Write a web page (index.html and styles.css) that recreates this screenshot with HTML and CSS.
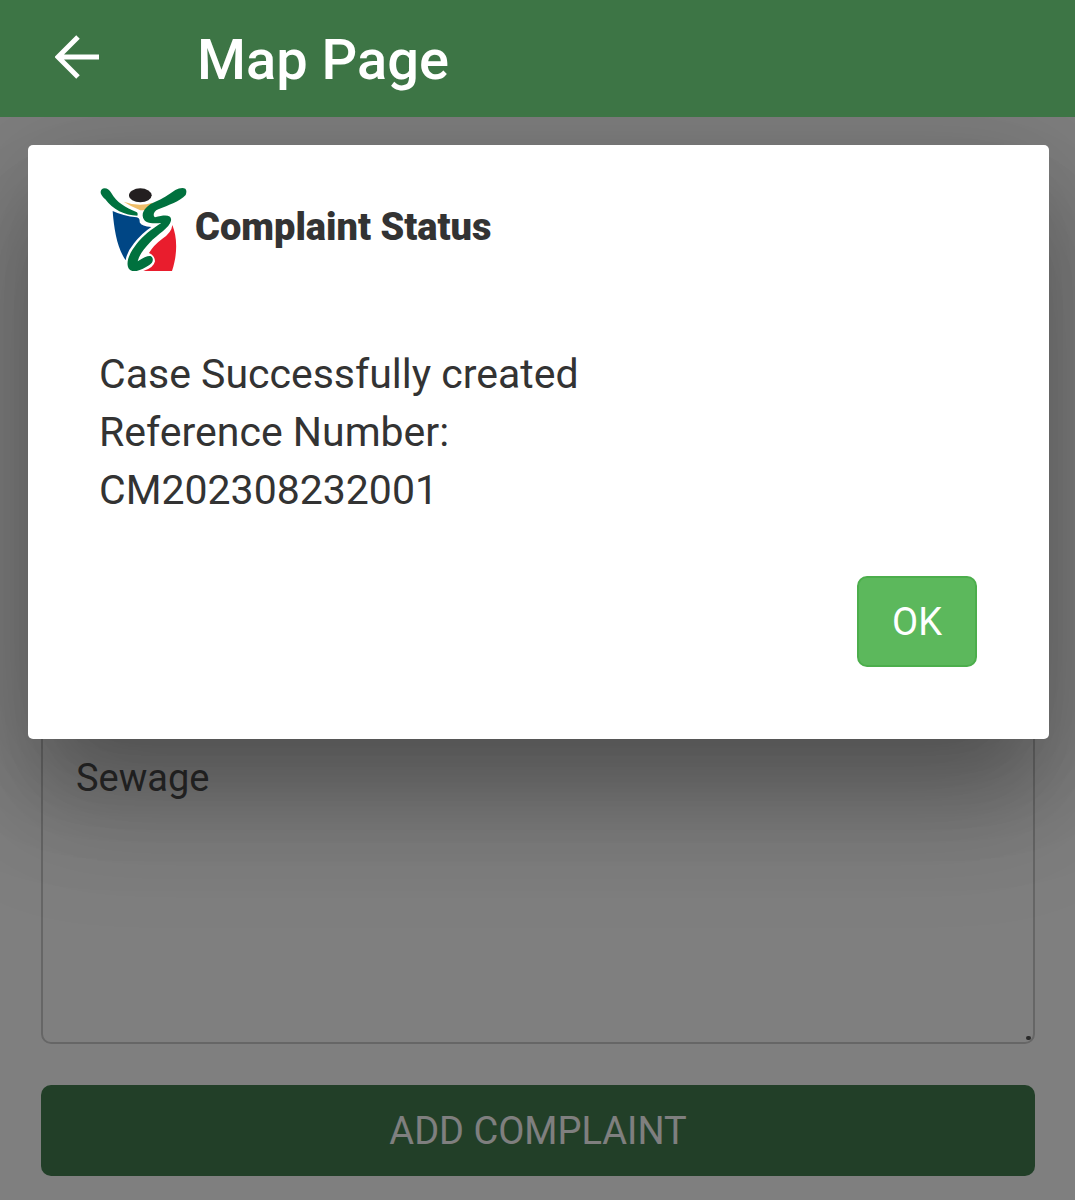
FILE: index.html
```
<!DOCTYPE html>
<html lang="en">
<head>
    <meta charset="UTF-8">
    <meta name="viewport" content="width=device-width, initial-scale=1.0">
    <title>Map Page</title>
    <link rel="stylesheet" href="styles.css">
</head>
<body>

    <header class="toolbar">
        <button class="back-button" type="button" aria-label="Back">
            <svg viewBox="0 0 44 44" width="44" height="44">
                <path d="M44 22H5M23 2L3 22L23 42" fill="none" stroke="#fff" stroke-width="5"/>
            </svg>
        </button>
        <h1>Map Page</h1>
    </header>

    <main class="page">
        <form class="complaint-form">
            <div class="field">
                <textarea id="complaint" aria-label="Complaint">Sewage</textarea>
                <span class="resize-dot"></span>
            </div>
            <button class="add-button" type="button">ADD COMPLAINT</button>
        </form>

        <!-- Status dialog -->
        <div class="overlay">
            <div class="dialog" role="dialog" aria-labelledby="dialog-title">
                <div class="dialog-header">
                    <svg class="logo" viewBox="27 15 264 258" width="88" height="86">
                        <path d="M101 65Q147 82 188 68Q181 81 164 91H151Q124 80 101 65Z" fill="#f0bd68"/>
                        <ellipse cx="151" cy="46" rx="34" ry="21" fill="#231f20"/>
                        <path d="M68 93Q99 108 140 112Q150 114 149 127Q155 140 184 141Q155 160 132 190Q110 217 107 241C82 205 72 149 68 93Z" fill="#004685"/>
                        <path d="M247 135C261 169 264 219 246 273H160Q191 264 195 244Q194 226 177 219Q190 196 217 176Q245 158 247 135Z" fill="#e91d2d"/>
                        <path d="M34 29C44 20 57 27 64 39C79 67 107 83 139 96Q145 99 142 107C105 107 67 88 46 58C36 48 28 39 34 29Z" fill="#00713e"/>
                        <path d="M286 26C278 22 266 25 256 30C235 45 216 57 196 65C173 74 157 91 158 107C160 128 180 132 214 129C185 148 160 165 139 193C119 219 105 247 117 267C130 282 157 269 177 256C190 248 192 235 183 229C178 225 164 230 143 244C149 222 161 207 179 188C203 162 239 143 243 122C246 105 228 102 195 112C188 107 190 94 205 88C236 75 270 64 287 45C290 37 290 30 286 26Z" fill="#00713e"/>
                    </svg>
                    <h2 id="dialog-title">Complaint Status</h2>
                </div>
                <p class="message">
                    Case Successfully created<br>
                    Reference Number:<br>
                    CM202308232001
                </p>
                <div class="dialog-actions">
                    <button class="ok-button" type="button">OK</button>
                </div>
            </div>
        </div>
    </main>

</body>
</html>
```
FILE: styles.css
```
* {
    box-sizing: border-box;
}

body {
    margin: 0;
    min-height: 100vh;
    display: flex;
    flex-direction: column;
    font-family: Roboto, sans-serif;
    color: #333;
    background-color: #fff;
}

button,
textarea {
    font-family: inherit;
    font-size: 38px;
}

button {
    cursor: pointer;
}

.toolbar {
    display: flex;
    align-items: center;
    gap: 98px;
    padding: 0 55px;
    height: 117px;
    background-color: #3d7545;
}

.toolbar h1 {
    margin: 0;
    padding-top: 2px;
    font-size: 56px;
    font-weight: 500;
    color: #fff;
}

.back-button {
    display: flex;
    padding: 0 0 4px;
    border: none;
    background: none;
}

.page {
    position: relative;
    flex: 1;
    display: flex;
    flex-direction: column;
    justify-content: flex-end;
    padding: 0 40px 24px 41px;
}

.complaint-form {
    display: flex;
    flex-direction: column;
    gap: 41px;
}

.field {
    position: relative;
    display: flex;
}

.field textarea {
    width: 100%;
    height: 320px;
    padding: 25px 33px;
    line-height: 54px;
    color: #555;
    background-color: #fff;
    border: 2px solid #ccc;
    border-radius: 10px;
    resize: none;
}

.resize-dot {
    position: absolute;
    right: 4px;
    bottom: 4px;
    width: 5px;
    height: 4px;
    border-radius: 2px;
    background-color: #555;
}

.add-button {
    height: 91px;
    color: #fff;
    background-color: #447f50;
    border: none;
    border-radius: 10px;
}

/* Dialog */
.overlay {
    position: absolute;
    inset: 0;
    padding: 28px 26px 28px 28px;
    overflow: hidden;
    background-color: rgba(0, 0, 0, 0.5);
}

.dialog {
    padding: 40px 72px 72px 71px;
    background-color: #fff;
    border-radius: 5px;
    box-shadow: 0 58px 78px -18px rgba(0, 0, 0, 0.18),
        0 63px 130px 8px rgba(0, 0, 0, 0.14),
        0 24px 121px 21px rgba(0, 0, 0, 0.12);
}

.dialog-header {
    display: flex;
    align-items: center;
    gap: 8px;
}

.dialog-header h2 {
    margin: 0;
    padding-bottom: 2px;
    font-size: 38px;
    font-weight: 900;
}

.message {
    margin: 74px 0 57px;
    font-size: 41px;
    line-height: 58px;
}

.dialog-actions {
    display: flex;
    justify-content: flex-end;
}

.ok-button {
    height: 91px;
    padding: 0 33px;
    color: #fff;
    background-color: #5cb85c;
    border: 2px solid #4cae4c;
    border-radius: 10px;
}
```
